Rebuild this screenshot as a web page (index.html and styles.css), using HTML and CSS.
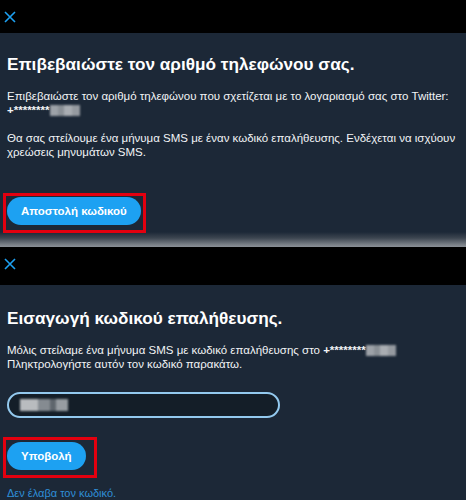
FILE: index.html
```html
<!DOCTYPE html>
<html lang="el">
<head>
<meta charset="utf-8">
<title>Επιβεβαίωση τηλεφώνου</title>
<link rel="stylesheet" href="styles.css">
</head>
<body>
<div class="header">
  <svg class="close" width="12" height="12" viewBox="0 0 12 12" aria-hidden="true"><path d="M1 1 L11 11 M11 1 L1 11" stroke="#1da1f2" stroke-width="1.6" fill="none"/></svg>
</div>
<section class="panel panel-first">
  <h1 class="title">Επιβεβαιώστε τον αριθμό τηλεφώνου σας.</h1>
  <p class="text">Επιβεβαιώστε τον αριθμό τηλεφώνου που σχετίζεται με το λογαριασμό σας στο Twitter:<br><strong class="phone">+********</strong><span class="redact"></span></p>
  <p class="text text-gap">Θα σας στείλουμε ένα μήνυμα SMS με έναν κωδικό επαλήθευσης. Ενδέχεται να ισχύουν χρεώσεις μηνυμάτων SMS.</p>
  <div class="highlight hl-send"><button class="btn">Αποστολή κωδικού</button></div>
</section>
<div class="header header-second">
  <svg class="close" width="12" height="12" viewBox="0 0 12 12" aria-hidden="true"><path d="M1 1 L11 11 M11 1 L1 11" stroke="#1da1f2" stroke-width="1.6" fill="none"/></svg>
</div>
<section class="panel panel-second">
  <h1 class="title">Εισαγωγή κωδικού επαλήθευσης.</h1>
  <p class="text">Μόλις στείλαμε ένα μήνυμα SMS με κωδικό επαλήθευσης στο <strong class="phone">+********</strong><span class="redact"></span><br>Πληκτρολογήστε αυτόν τον κωδικό παρακάτω.</p>
  <div class="field"><span class="redact redact-code"></span></div>
  <div class="highlight hl-submit"><button class="btn">Υποβολή</button></div>
  <a class="link" href="#">Δεν έλαβα τον κωδικό.</a>
</section>
</body>
</html>
```
FILE: styles.css
```css
html, body {
  margin: 0;
  padding: 0;
  background: #000;
  font-family: "Liberation Sans", Arial, sans-serif;
  color: #fff;
}
.header {
  height: 33px;
  display: flex;
  align-items: center;
  padding-left: 4px;
  background: #000;
}
.header-second {
  height: 38px;
  align-items: flex-start;
  padding-top: 11px;
  box-sizing: border-box;
}
.close { display: block; }
.panel {
  background: #1c2837;
  padding: 0 7px;
  display: flex;
  flex-direction: column;
  align-items: flex-start;
}
.panel-first {
  height: 214px;
  box-sizing: border-box;
  padding-top: 21px;
  background: linear-gradient(to bottom, #1c2837 0, #1c2837 199px, #3c4550 205px, #7d838a 212px, #8a9096 214px);
}
.panel-second {
  height: 215px;
  box-sizing: border-box;
  padding-top: 23px;
}
.title {
  margin: 0;
  font-size: 17.2px;
  line-height: 20px;
  font-weight: 700;
}
.text {
  margin: 15px 0 0;
  font-size: 11.5px;
  line-height: 14px;
  color: #f2f4f6;
}
.text-gap { margin-top: 14px; }
.phone { font-weight: 700; }
.redact {
  display: inline-block;
  width: 30px;
  height: 11px;
  vertical-align: -2px;
  background:
    linear-gradient(90deg, #9da2a8 0 8px, #8a9096 8px 14px, #a9adb2 14px 22px, #959aa0 22px 30px);
  filter: blur(0.8px);
}
.highlight {
  display: flex;
  border: 3px solid #e3000f;
  margin-left: -4px;
}
.hl-send {
  margin-top: 34px;
  padding: 1px 2px 5px 1px;
}
.hl-submit {
  margin-top: 19px;
  padding: 2px 8px 5px 1px;
}
.btn {
  border: 0;
  margin: 0;
  height: 28px;
  padding: 0 14px;
  border-radius: 14px;
  background: #1da1f2;
  color: #fff;
  font-family: "Liberation Sans", Arial, sans-serif;
  font-weight: 700;
  font-size: 11.5px;
}
.field {
  margin-top: 21px;
  width: 273px;
  height: 29px;
  box-sizing: border-box;
  border: 2px solid #93c9ee;
  border-radius: 15px;
  background: #141e28;
  display: flex;
  align-items: center;
  padding-left: 11px;
}
.redact-code {
  width: 48px;
  height: 12px;
  background:
    linear-gradient(90deg, #b9bcbf 0 18px, #858b91 18px 30px, #5f666d 30px 36px, #989da2 36px 48px);
  filter: blur(1.2px);
}
.link {
  margin-top: 8px;
  font-size: 11px;
  line-height: 14px;
  color: #2f8fd8;
  text-decoration: none;
}
```
